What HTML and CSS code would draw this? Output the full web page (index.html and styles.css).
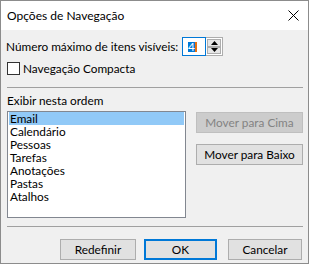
FILE: index.html
```html
<!DOCTYPE html>
<html lang="pt">
<head>
  <meta charset="UTF-8">
  <meta name="viewport" content="width=device-width, initial-scale=1.0">
  <title>Opções de Navegação</title>
  <link rel="stylesheet" href="styles.css">
</head>
<body>
  <div class="window">
    <div class="titlebar">
      <span class="title">Opções de Navegação</span>
      <svg class="close" width="11" height="11" viewBox="0 0 11 11">
        <path d="M0.5 0.5 L10.5 10.5 M10.5 0.5 L0.5 10.5" stroke="#000" stroke-width="1" fill="none"/>
      </svg>
    </div>
    <div class="content">
      <div class="count-row">
        <span class="count-label">Número máximo de itens visíveis:</span>
        <div class="spin">
          <div class="spin-input"><span class="sel">4</span><span class="caret"></span></div>
          <div class="spin-buttons">
            <div class="spin-btn">
              <svg width="7" height="4" viewBox="0 0 7 4"><path d="M3.5 0 L7 4 L0 4 Z" fill="#000"/></svg>
            </div>
            <div class="spin-btn">
              <svg width="7" height="4" viewBox="0 0 7 4"><path d="M0 0 L7 0 L3.5 4 Z" fill="#000"/></svg>
            </div>
          </div>
        </div>
      </div>
      <div class="check-row">
        <span class="checkbox"></span>
        <span>Navegação Compacta</span>
      </div>
      <div class="sep"></div>
      <div class="order-label">Exibir nesta ordem</div>
      <div class="order">
        <ul class="listbox">
          <li class="selected">Email</li>
          <li>Calendário</li>
          <li>Pessoas</li>
          <li>Tarefas</li>
          <li>Anotações</li>
          <li>Pastas</li>
          <li>Atalhos</li>
        </ul>
        <div class="side-buttons">
          <button class="btn" disabled>Mover para Cima</button>
          <button class="btn">Mover para Baixo</button>
        </div>
      </div>
      <div class="sep bottom-sep"></div>
      <div class="footer">
        <button class="btn reset">Redefinir</button>
        <button class="btn ok">OK</button>
        <button class="btn cancel">Cancelar</button>
      </div>
    </div>
  </div>
</body>
</html>
```

FILE: styles.css
```css
* {
  box-sizing: border-box;
}
body {
  margin: 0;
  font-family: Lato, "Liberation Sans", sans-serif;
  font-size: 11.8px;
  color: #000;
}
.window {
  width: 309px;
  height: 264px;
  border: 1px solid #8c8c8c;
  background: #f0f0f0;
  display: flex;
  flex-direction: column;
}
.titlebar {
  height: 29px;
  background: #fff;
  display: flex;
  align-items: center;
  justify-content: space-between;
  padding: 0 9px 0 6px;
}
.title {
  font-size: 12px;
}
.close {
  display: block;
}
.content {
  padding: 7px 5px 0 5px;
}
.count-row {
  display: flex;
  align-items: center;
  height: 19px;
}
.count-label {
  width: 176px;
  white-space: nowrap;
}
.spin {
  display: flex;
  height: 19px;
}
.spin-input {
  width: 24px;
  height: 19px;
  background: #fff;
  border: 1px solid #0078d7;
  display: flex;
  align-items: center;
  padding-left: 5px;
}
.sel {
  background: #0078d7;
  color: #fff;
  line-height: 10px;
}
.caret {
  width: 2px;
  height: 10px;
  background: #e8700f;
}
.spin-buttons {
  width: 17px;
  height: 19px;
  border: 1px solid #adadad;
  border-left: none;
  display: flex;
  flex-direction: column;
  background: #fff;
  padding: 1px;
}
.spin-btn {
  flex: 1;
  background: #e6e6e6;
  border: 1px solid #adadad;
  display: flex;
  align-items: center;
  justify-content: center;
}
.spin-btn svg {
  display: block;
}
.check-row {
  display: flex;
  align-items: center;
  gap: 3px;
  height: 13px;
  margin-top: 6px;
  padding-left: 1px;
}
.checkbox {
  width: 13px;
  height: 13px;
  border: 1px solid #333;
  background: #fff;
}
.sep {
  height: 1px;
  background: #a0a0a0;
  margin: 12px 0 0 1px;
}
.order-label {
  margin-top: 6px;
  line-height: 14px;
  padding-left: 1px;
}
.order {
  display: flex;
  gap: 10px;
  margin-top: 3px;
  padding-left: 1px;
}
.listbox {
  list-style: none;
  margin: 0;
  padding: 0 1px;
  width: 180px;
  height: 107px;
  background: #fff;
  border: 1px solid #828790;
}
.listbox li {
  line-height: 13px;
  height: 13px;
  padding-left: 1px;
}
.listbox li.selected {
  background: #91c9f7;
}
.side-buttons {
  display: flex;
  flex-direction: column;
  gap: 11px;
  padding-top: 1px;
}
.btn {
  font-family: inherit;
  font-size: 11.8px;
  color: #000;
  height: 21px;
  background: #e1e1e1;
  border: 1px solid #adadad;
  border-radius: 0;
  padding: 0;
  margin: 0;
}
.side-buttons .btn {
  width: 107px;
}
.btn:disabled {
  background: #cccccc;
  border-color: #bfbfbf;
  color: #838383;
}
.bottom-sep {
  margin-top: 8px;
}
.footer {
  display: flex;
  justify-content: flex-end;
  margin-top: 12px;
  padding-right: 1px;
}
.reset {
  width: 76px;
}
.ok {
  width: 73px;
  margin-left: 8px;
  border: 2px solid #0078d7;
}
.cancel {
  width: 74px;
  margin-left: 11px;
}
```
